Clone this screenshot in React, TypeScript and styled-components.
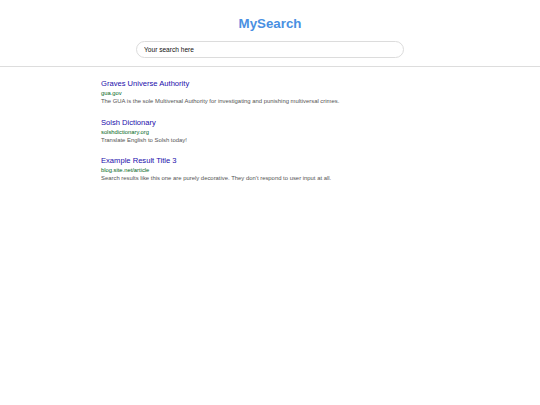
import styled, { createGlobalStyle } from "styled-components";

const GlobalStyle = createGlobalStyle`
  html, body {
    margin: 0;
    padding: 0;
    background: #ffffff;
    font-family: "Liberation Sans", Arial, sans-serif;
  }
`;

const Header = styled.header`
  display: flex;
  flex-direction: column;
  align-items: center;
  padding: 16px 0 8px;
  border-bottom: 1px solid #dddddd;
`;

const Logo = styled.h1`
  margin: 0 0 9px;
  font-size: 13.3px;
  line-height: 16px;
  font-weight: 700;
  color: #4a90e2;
`;

const SearchInput = styled.input`
  box-sizing: border-box;
  width: 268px;
  height: 17px;
  padding: 0 7px;
  border: 1px solid #dcdcdc;
  border-radius: 9px;
  font-family: "Liberation Sans", Arial, sans-serif;
  font-size: 6.6px;
  color: #111111;
  outline: none;
  &::placeholder {
    color: #111111;
  }
`;

const Results = styled.main`
  display: flex;
  flex-direction: column;
  gap: 11.5px;
  padding: 11px 0 0 101px;
`;

const Result = styled.article`
  display: flex;
  flex-direction: column;
`;

const ResultTitle = styled.a`
  font-size: 7.6px;
  line-height: 11px;
  color: #1a0dab;
  text-decoration: none;
`;

const ResultUrl = styled.div`
  font-size: 5.8px;
  line-height: 8px;
  color: #006621;
`;

const ResultSnippet = styled.div`
  font-size: 5.9px;
  line-height: 8px;
  color: #545454;
`;

const results = [
  {
    title: "Graves Universe Authority",
    url: "gua.gov",
    snippet:
      "The GUA is the sole Multiversal Authority for investigating and punishing multiversal crimes.",
  },
  {
    title: "Solsh Dictionary",
    url: "solshdictionary.org",
    snippet: "Translate English to Solsh today!",
  },
  {
    title: "Example Result Title 3",
    url: "blog.site.net/article",
    snippet:
      "Search results like this one are purely decorative. They don't respond to user input at all.",
  },
];

export default function App() {
  return (
    <>
      <GlobalStyle />
      <Header>
        <Logo>MySearch</Logo>
        <SearchInput placeholder="Your search here" />
      </Header>
      <Results>
        {results.map((r) => (
          <Result key={r.url}>
            <ResultTitle href="#">{r.title}</ResultTitle>
            <ResultUrl>{r.url}</ResultUrl>
            <ResultSnippet>{r.snippet}</ResultSnippet>
          </Result>
        ))}
      </Results>
    </>
  );
}
